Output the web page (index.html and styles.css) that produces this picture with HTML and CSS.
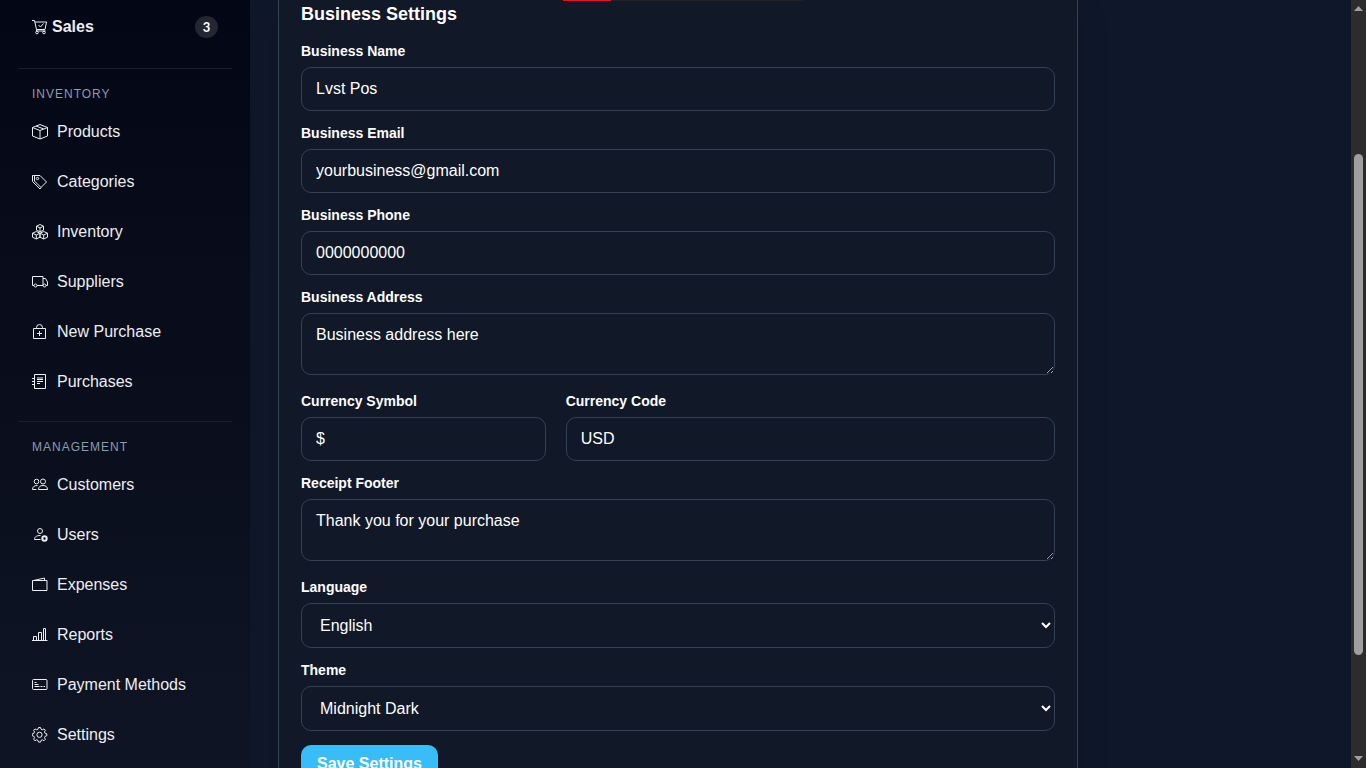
FILE: index.html
```html
<!DOCTYPE html>
<html lang="en">
<head>
  <meta charset="UTF-8">
  <meta name="viewport" content="width=device-width, initial-scale=1.0">
  <title>Business Settings</title>
  <link rel="stylesheet" href="styles.css">
</head>
<body>
  <div class="load-bar"><div class="load-fill"></div></div>

  <div class="app">
    <aside class="sidebar">
      <a href="#" class="nav-group">
        <svg class="icon" viewBox="0 0 16 16"><path d="M0 1.500h2.500l2 9h8.500l1.500-7.500H3M4.500 10.500v1.500h9"/><path d="M6.500 6l2 2 3-3.500"/><circle cx="5" cy="13.500" r="1.300"/><circle cx="12" cy="13.500" r="1.300"/></svg>
        <span>Sales</span>
        <span class="badge">3</span>
      </a>

      <nav class="nav-section">
        <div class="nav-title">Inventory</div>
        <a href="#" class="nav-link">
          <svg class="icon" viewBox="0 0 16 16"><path d="M8 .5l7.500 3v8.500L8 15 .5 12V3.500zM.5 3.500l7.500 3 7.500-3M8 6.500V15M4.200 2l7.500 3"/></svg>
          Products
        </a>
        <a href="#" class="nav-link">
          <svg class="icon" viewBox="0 0 16 16"><path d="M2.500 1.500H8l6.500 6.500L9 13.500 2.500 7zM2.500 1.500H.5v6L8 15l1-1.500"/><circle cx="5.500" cy="4.500" r="1.200"/></svg>
          Categories
        </a>
        <a href="#" class="nav-link">
          <svg class="icon" viewBox="0 0 16 16"><path d="M8 .5l3.500 1.700v4L8 7.900 4.500 6.200v-4zM4.500 2.200L8 3.900l3.500-1.700M8 3.900v4M4.300 7.500L8 9.200v4l-3.700 1.800L.5 13.200v-4zM.5 9.200l3.800 1.800L8 9.200M4.300 11v4M11.700 7.500L8 9.200v4l3.700 1.800 3.800-1.800v-4zM8 9.200l3.700 1.800 3.800-1.800M11.700 11v4"/></svg>
          Inventory
        </a>
        <a href="#" class="nav-link">
          <svg class="icon" viewBox="0 0 16 16"><path d="M2 11.500H.5v-9H11v9H5M11 4.500h2.500l2 3.500v3.500H14"/><circle cx="3.500" cy="11.500" r="1.500"/><circle cx="12.500" cy="11.500" r="1.500"/></svg>
          Suppliers
        </a>
        <a href="#" class="nav-link">
          <svg class="icon" viewBox="0 0 16 16"><path d="M1.500 4.500h12v10h-12zM4.500 4.500v-1a3 3 0 0 1 6 0v1M7.500 7v5M5 9.500h5"/></svg>
          New Purchase
        </a>
        <a href="#" class="nav-link">
          <svg class="icon" viewBox="0 0 16 16"><path d="M2.500.5h11v14h-11zM0 4.500h3M0 7.500h3M0 10.500h3M5 4h6M5 5.500h6M5 7.500h6M5 9.500h3"/></svg>
          Purchases
        </a>
      </nav>

      <nav class="nav-section">
        <div class="nav-title">Management</div>
        <a href="#" class="nav-link">
          <svg class="icon" viewBox="0 0 16 16"><circle cx="11" cy="4.500" r="2.500"/><circle cx="4.500" cy="4.500" r="2.300"/><path d="M6.500 12.500c0-2.500 1.500-4 4.500-4s4.500 1.500 4.500 4zM4.500 12.500h-4c0-2.500 1.500-4 5-4"/></svg>
          Customers
        </a>
        <a href="#" class="nav-link">
          <svg class="icon" viewBox="0 0 16 16"><circle cx="8" cy="4" r="2.500"/><path d="M8.500 12.500h-6c0-2.500 1.500-4 6-4"/><circle class="thick" cx="12.500" cy="11.500" r="2.200"/></svg>
          Users
        </a>
        <a href="#" class="nav-link">
          <svg class="icon" viewBox="0 0 16 16"><path d="M.5 3.500h14.500v10H.5zM1.500 3.500l11-2.500v2.500"/></svg>
          Expenses
        </a>
        <a href="#" class="nav-link">
          <svg class="icon" viewBox="0 0 16 16"><path d="M0 13.500h15.500M1.500 13.500v-4h3v4M6.500 13.500v-8h3v8M11.500 13.500v-12h2v12"/></svg>
          Reports
        </a>
        <a href="#" class="nav-link">
          <svg class="icon" viewBox="0 0 16 16"><rect x=".5" y="2.500" width="14.500" height="10" rx="1"/><path d="M2.500 5.500h2M2.500 7.500h4M2.500 9.500h5M8.500 9.500h2M11.500 9.500h1.500"/></svg>
          Payment Methods
        </a>
        <a href="#" class="nav-link">
          <svg class="icon" viewBox="0 0 16 16"><path d="M6 2.200L6.500.5h2L9 2.200l1.400.6 1.600-.9 1.400 1.400-.9 1.600.6 1.400 1.700.5v2l-1.700.5-.6 1.400.9 1.600-1.400 1.400-1.600-.9-1.400.6-.5 1.700h-2L6 13.400l-1.400-.6-1.600.9-1.400-1.400.9-1.600-.6-1.400L.3 8.800v-2L1.900 6.300l.6-1.400-.9-1.600L3 1.900l1.600.9z"/><circle cx="7.500" cy="7.800" r="2.600"/></svg>
          Settings
        </a>
      </nav>
    </aside>

    <main class="content">
      <form class="card">
        <h2>Business Settings</h2>
        <div class="field">
          <label for="name">Business Name</label>
          <input type="text" id="name" value="Lvst Pos">
        </div>
        <div class="field">
          <label for="email">Business Email</label>
          <input type="email" id="email" value="yourbusiness@gmail.com">
        </div>
        <div class="field">
          <label for="phone">Business Phone</label>
          <input type="text" id="phone" value="0000000000">
        </div>
        <div class="field">
          <label for="address">Business Address</label>
          <textarea id="address" rows="2">Business address here</textarea>
        </div>
        <div class="field-row">
          <div class="field">
            <label for="symbol">Currency Symbol</label>
            <input type="text" id="symbol" value="$">
          </div>
          <div class="field">
            <label for="code">Currency Code</label>
            <input type="text" id="code" value="USD">
          </div>
        </div>
        <div class="field">
          <label for="footer">Receipt Footer</label>
          <textarea id="footer" rows="2">Thank you for your purchase</textarea>
        </div>
        <div class="field">
          <label for="language">Language</label>
          <select id="language"><option>English</option></select>
        </div>
        <div class="field">
          <label for="theme">Theme</label>
          <select id="theme"><option>Midnight Dark</option></select>
        </div>
        <button type="submit" class="btn">Save Settings</button>
      </form>
    </main>

    <div class="scrollbar">
      <svg class="arrow" viewBox="0 0 9 5"><path d="M0 5l4.500-5L9 5z"/></svg>
      <div class="track"><div class="thumb"></div></div>
      <svg class="arrow" viewBox="0 0 9 5"><path d="M0 0l4.500 5L9 0z"/></svg>
    </div>
  </div>
</body>
</html>
```

FILE: styles.css
```css
* {
  box-sizing: border-box;
}
body {
  margin: 0;
  font-family: Arial, "Liberation Sans", sans-serif;
  font-size: 16px;
  background: #0f172a;
  color: #fff;
  overflow: hidden;
}
.app {
  display: flex;
  height: 100vh;
}
.load-bar {
  position: absolute;
  top: 0;
  left: 50%;
  width: 240px;
  height: 1px;
  transform: translateX(-50%);
  background: #222;
  z-index: 10;
}
.load-fill {
  width: 20%;
  height: 100%;
  background: #e81123;
}

/* sidebar */
.sidebar {
  flex: 0 0 250px;
  padding: 6px 18px;
  overflow: hidden;
  background: linear-gradient(180deg, #030615, #0f1524);
}
.sidebar a {
  display: flex;
  align-items: center;
  height: 42px;
  padding: 0 14px;
  color: #eceef2;
  text-decoration: none;
}
.icon {
  flex: none;
  width: 16px;
  height: 16px;
  fill: none;
  stroke: currentColor;
  stroke-width: 1;
}
.icon .thick {
  stroke-width: 2;
}
.sidebar .nav-group {
  gap: 4px;
  margin-bottom: 20px;
  font-weight: bold;
}
.badge {
  width: 23px;
  height: 22px;
  margin-left: auto;
  border-radius: 50%;
  background: #242632;
  color: #fff;
  font: bold 13px/22px Lato, sans-serif;
  text-align: center;
}
.nav-section {
  display: flex;
  flex-direction: column;
  gap: 8px;
  margin-bottom: 18px;
  padding-top: 16px;
  border-top: 1px solid #1a1e2c;
}
.nav-title {
  padding: 0 14px;
  color: #8b9bb0;
  font-size: 12px;
  line-height: 18px;
  letter-spacing: 1px;
  text-transform: uppercase;
}
.nav-link {
  gap: 9px;
}

/* settings form */
.content {
  flex: 1;
  min-width: 0;
  padding: 0 28px;
}
.card {
  max-width: 800px;
  min-height: 100vh;
  padding: 3px 22px 22px;
  border: 1px solid #334155;
  border-width: 0 1px;
  background: #111827;
  box-shadow: 0 10px 30px rgba(0, 0, 0, 0.15);
}
.card h2 {
  margin: 0 0 18px;
  font-size: 18px;
  line-height: 22px;
}
.field {
  margin-bottom: 14px;
}
.field label {
  display: block;
  margin-bottom: 8px;
  font-size: 14px;
  font-weight: bold;
  line-height: 16px;
}
.field-row {
  display: grid;
  grid-template-columns: 1fr 2fr;
  gap: 20px;
}
.field input,
.field textarea,
.field select {
  display: block;
  width: 100%;
  height: 44px;
  padding: 12px 14px;
  border: 1px solid #334155;
  border-radius: 10px;
  background: #111827;
  color: #fff;
  font: inherit;
  outline: none;
}
.field textarea {
  height: 62px;
  margin-bottom: 18px;
}
.field select {
  height: 45px;
}
.btn {
  padding: 10px 16px;
  border: 0;
  border-radius: 10px;
  background: #38bdf8;
  color: #fff;
  font: bold 16px/18px Arial, "Liberation Sans", sans-serif;
}

/* page scrollbar */
.scrollbar {
  display: flex;
  flex: 0 0 15px;
  flex-direction: column;
  align-items: center;
  padding: 6px 0 7px;
  background: #2c2c2c;
}
.arrow {
  width: 9px;
  height: 5px;
  fill: #9f9f9f;
}
.track {
  flex: 1;
  width: 9px;
  padding: 143px 0 101px;
}
.thumb {
  height: 100%;
  border-radius: 5px;
  background: #9f9f9f;
}
```
